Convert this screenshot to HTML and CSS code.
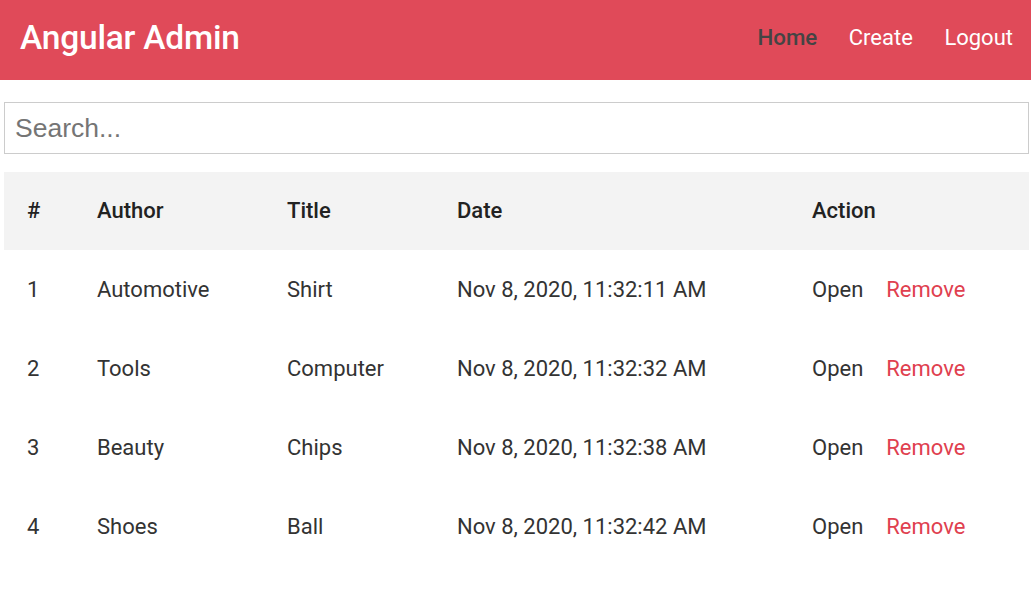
FILE: index.html
```html
<!DOCTYPE html>
<html>
<head>
<meta charset="utf-8">
<link rel="stylesheet" href="styles.css">
</head>
<body>
<header class="topbar">
  <div class="brand">Angular Admin</div>
  <nav class="nav">
    <a class="nav-link active">Home</a>
    <a class="nav-link">Create</a>
    <a class="nav-link">Logout</a>
  </nav>
</header>
<main class="content">
  <input class="search" type="text" placeholder="Search...">
  <table class="posts">
    <colgroup>
      <col class="c-num"><col class="c-author"><col class="c-title"><col class="c-date"><col class="c-action">
    </colgroup>
    <thead>
      <tr><th>#</th><th>Author</th><th>Title</th><th>Date</th><th>Action</th></tr>
    </thead>
    <tbody>
      <tr><td>1</td><td>Automotive</td><td>Shirt</td><td>Nov 8, 2020, 11:32:11 AM</td><td><a class="open">Open</a><a class="remove">Remove</a></td></tr>
      <tr><td>2</td><td>Tools</td><td>Computer</td><td>Nov 8, 2020, 11:32:32 AM</td><td><a class="open">Open</a><a class="remove">Remove</a></td></tr>
      <tr><td>3</td><td>Beauty</td><td>Chips</td><td>Nov 8, 2020, 11:32:38 AM</td><td><a class="open">Open</a><a class="remove">Remove</a></td></tr>
      <tr><td>4</td><td>Shoes</td><td>Ball</td><td>Nov 8, 2020, 11:32:42 AM</td><td><a class="open">Open</a><a class="remove">Remove</a></td></tr>
    </tbody>
  </table>
</main>
</body>
</html>
```
FILE: styles.css
```css
* { box-sizing: border-box; }
body {
  margin: 0;
  font-family: Roboto, "Noto Sans", sans-serif;
  color: #333;
  background: #fff;
}
.topbar {
  height: 80px;
  background: #e04a59;
  display: flex;
  align-items: center;
  justify-content: space-between;
  padding: 0 18px 6px 20px;
}
.brand {
  color: #fff;
  font-size: 33.5px;
  font-weight: 500;
  letter-spacing: -0.2px;
}
.nav {
  display: flex;
  align-items: baseline;
  gap: 31.5px;
}
.nav-link {
  color: #fff;
  font-size: 22px;
  cursor: pointer;
}
.nav-link.active {
  color: #444;
  font-weight: 500;
  font-size: 22.3px;
}
.content {
  padding: 22px 2px 0 4px;
}
.search {
  display: block;
  width: 100%;
  height: 52px;
  border: 1px solid #ccc;
  padding: 0 10px;
  font-family: "Liberation Sans", Arial, sans-serif;
  font-size: 26.5px;
  color: #333;
  outline: none;
}
.search::placeholder { color: #757575; }
.posts {
  margin-top: 18px;
  width: 100%;
  border-collapse: collapse;
  table-layout: fixed;
  font-size: 22px;
}
.c-num { width: 70px; }
.c-author { width: 190px; }
.c-title { width: 170px; }
.c-date { width: 355px; }
.posts th, .posts td {
  text-align: left;
  padding: 0 0 0 23px;
  height: 79px;
  white-space: nowrap;
}
.posts thead tr { background: #f3f3f3; }
.posts th {
  height: 78px;
  padding-bottom: 2px;
  font-weight: 500;
  color: #222;
}
.open { color: #333; margin-right: 23px; cursor: pointer; }
.remove { color: #e0404f; cursor: pointer; }
```
